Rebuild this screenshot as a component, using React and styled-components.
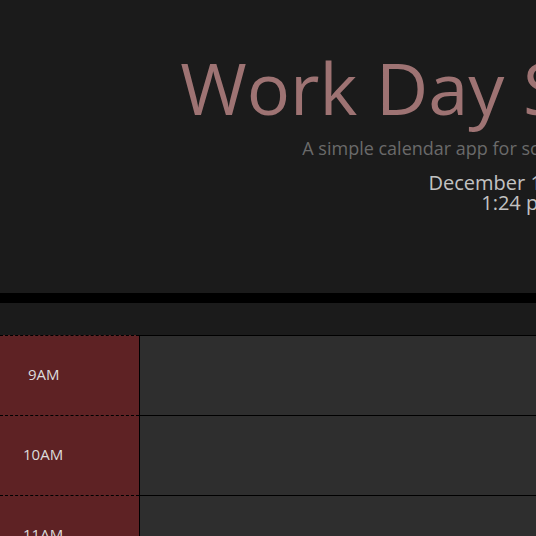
import React from 'react';
import styled, { createGlobalStyle } from 'styled-components';

const GlobalStyle = createGlobalStyle`
  html, body {
    margin: 0;
    padding: 0;
    overflow: hidden;
    background-color: #1b1b1b;
    font-family: "Open Sans", "DejaVu Sans", sans-serif;
  }
`;

const Page = styled.div`
  width: 1038px;
  background-color: #1b1b1b;
`;

const Jumbotron = styled.header`
  height: 303px;
  box-sizing: border-box;
  padding-top: 44px;
  text-align: center;
  border-bottom: 10px solid #000;
`;

const Title = styled.h1`
  margin: 0;
  font-size: 72px;
  font-weight: 400;
  line-height: 1.2;
  color: #9e7373;
`;

const Lead = styled.p`
  margin: 6px 0 13px;
  font-size: 18px;
  font-weight: 400;
  color: #6a6a6a;
`;

const Clock = styled.p`
  margin: 0;
  font-size: 20px;
  line-height: 20px;
  color: #c2c2c2;
`;

const Schedule = styled.main`
  padding-top: 32px;
`;

const TimeBlock = styled.div`
  display: flex;
  height: 80px;
`;

const Hour = styled.div`
  width: 139px;
  box-sizing: border-box;
  display: flex;
  align-items: center;
  padding-left: ${props => props.pad}px;
  padding-bottom: 4px;
  border-top: 1px dashed #000;
  background-color: #5e2224;
  color: #dcdcdc;
  font-size: 15px;
`;

const Entry = styled.textarea`
  flex: 1;
  margin: 0;
  border: none;
  border-top: 1px solid #000;
  border-left: 1px solid #000;
  background-color: #2e2e2e;
  resize: none;
  outline: none;
`;

const hours = ['9AM', '10AM', '11AM', '12PM', '1PM'];

export default function App() {
  return (
    <Page>
      <GlobalStyle />
      <Jumbotron>
        <Title>Work Day Scheduler</Title>
        <Lead>A simple calendar app for scheduling your work day</Lead>
        <Clock>December 13, 2023</Clock>
        <Clock>1:24 pm</Clock>
      </Jumbotron>
      <Schedule>
        {hours.map(h => (
          <TimeBlock key={h}>
            <Hour pad={h.length === 3 ? 28 : 23}>{h}</Hour>
            <Entry />
          </TimeBlock>
        ))}
      </Schedule>
    </Page>
  );
}
